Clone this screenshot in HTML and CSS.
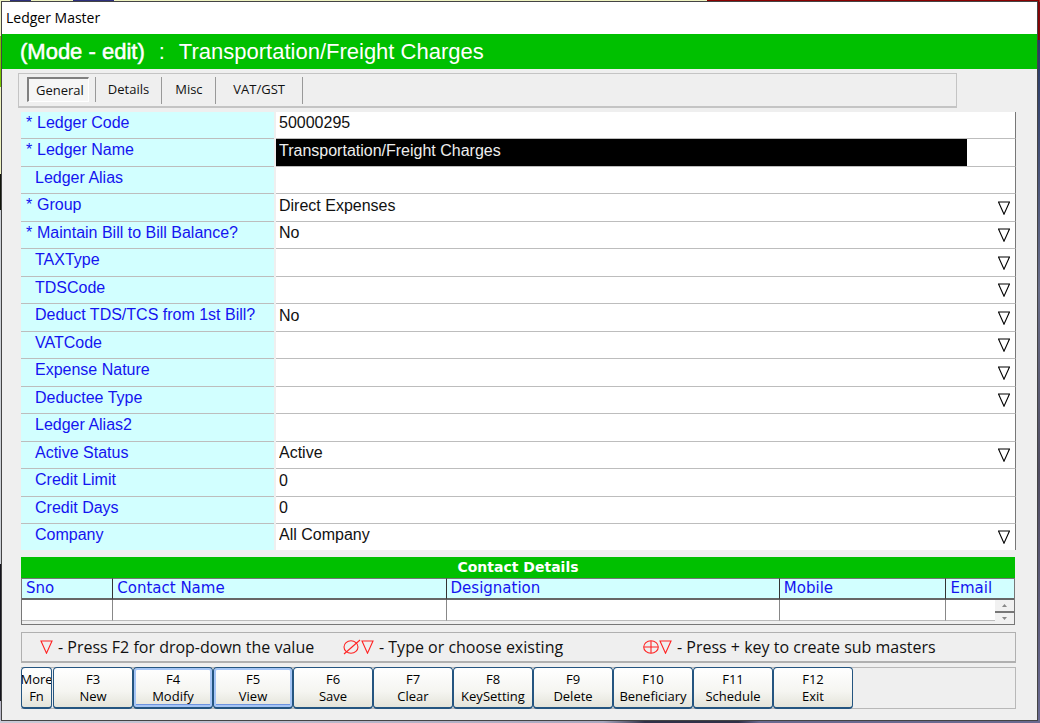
FILE: index.html
```html
<!DOCTYPE html>
<html lang="en">
<head>
<meta charset="utf-8">
<title>Ledger Master</title>
<link rel="stylesheet" href="styles.css">
</head>
<body>
<svg class="defs" aria-hidden="true">
  <symbol id="tri" viewBox="0 0 12 14"><path d="M.5 1H11.5L6 13.2Z" fill="none" stroke="currentColor" stroke-width="1.1"/></symbol>
  <symbol id="nil" viewBox="0 0 18 16"><ellipse cx="8" cy="8" rx="7" ry="6.2" fill="none" stroke="currentColor" stroke-width="1.1"/><path d="M1 15 17 1" stroke="currentColor" stroke-width="1.1"/></symbol>
  <symbol id="plus" viewBox="0 0 16 16"><ellipse cx="8" cy="8" rx="7.3" ry="6.3" fill="none" stroke="currentColor" stroke-width="1.1"/><path d="M1 8H15M8 2V14" stroke="currentColor" stroke-width="1.1"/></symbol>
</svg>
<main class="window">
  <header class="titlebar">Ledger Master</header>
  <h1 class="banner"><span class="mode">(Mode - edit)</span><span>:</span><span>Transportation/Freight Charges</span></h1>
  <nav class="tabs">
    <button class="tab active" type="button">General</button>
    <button class="tab" type="button">Details</button>
    <button class="tab" type="button">Misc</button>
    <button class="tab" type="button">VAT/GST</button>
  </nav>
  <form class="form">
    <div class="row"><label class="req" for="code">Ledger Code</label><div class="cell"><input id="code" type="text" value="50000295"></div></div>
    <div class="row"><label class="req" for="name">Ledger Name</label><div class="cell"><input id="name" class="selected" type="text" value="Transportation/Freight Charges"></div></div>
    <div class="row"><label for="alias">Ledger Alias</label><div class="cell"><input id="alias" type="text"></div></div>
    <div class="row"><label class="req" for="group">Group</label><div class="cell"><select id="group"><option>Direct Expenses</option></select><svg class="arrow"><use href="#tri"/></svg></div></div>
    <div class="row"><label class="req" for="bill">Maintain Bill to Bill Balance?</label><div class="cell"><select id="bill"><option>No</option></select><svg class="arrow"><use href="#tri"/></svg></div></div>
    <div class="row"><label for="tax">TAXType</label><div class="cell"><select id="tax"><option></option></select><svg class="arrow"><use href="#tri"/></svg></div></div>
    <div class="row"><label for="tds">TDSCode</label><div class="cell"><select id="tds"><option></option></select><svg class="arrow"><use href="#tri"/></svg></div></div>
    <div class="row"><label for="deduct">Deduct TDS/TCS from 1st Bill?</label><div class="cell"><select id="deduct"><option>No</option></select><svg class="arrow"><use href="#tri"/></svg></div></div>
    <div class="row"><label for="vat">VATCode</label><div class="cell"><select id="vat"><option></option></select><svg class="arrow"><use href="#tri"/></svg></div></div>
    <div class="row"><label for="nature">Expense Nature</label><div class="cell"><select id="nature"><option></option></select><svg class="arrow"><use href="#tri"/></svg></div></div>
    <div class="row"><label for="deductee">Deductee Type</label><div class="cell"><select id="deductee"><option></option></select><svg class="arrow"><use href="#tri"/></svg></div></div>
    <div class="row"><label for="alias2">Ledger Alias2</label><div class="cell"><input id="alias2" type="text"></div></div>
    <div class="row"><label for="status">Active Status</label><div class="cell"><select id="status"><option>Active</option></select><svg class="arrow"><use href="#tri"/></svg></div></div>
    <div class="row"><label for="limit">Credit Limit</label><div class="cell"><input id="limit" type="text" value="0"></div></div>
    <div class="row"><label for="days">Credit Days</label><div class="cell"><input id="days" type="text" value="0"></div></div>
    <div class="row"><label for="company">Company</label><div class="cell"><select id="company"><option>All Company</option></select><svg class="arrow"><use href="#tri"/></svg></div></div>
  </form>
  <section class="contacts">
    <table>
      <caption>Contact Details</caption>
      <thead><tr><th class="sno">Sno</th><th class="wide">Contact Name</th><th class="wide">Designation</th><th class="mobile">Mobile</th><th>Email</th></tr></thead>
      <tbody><tr><td></td><td></td><td></td><td></td><td></td></tr></tbody>
    </table>
    <div class="spinner">
      <button type="button" aria-label="Scroll up"><svg viewBox="0 0 5 3"><path d="M0 3H5L2.500 0Z"/></svg></button>
      <button type="button" aria-label="Scroll down"><svg viewBox="0 0 5 3"><path d="M0 0H5L2.500 3Z"/></svg></button>
    </div>
  </section>
  <section class="legend">
    <p><svg class="tri"><use href="#tri"/></svg><span>- Press F2 for drop-down the value</span></p>
    <p><svg class="nil"><use href="#nil"/></svg><svg class="tri"><use href="#tri"/></svg><span>- Type or choose existing</span></p>
    <p><svg class="plus"><use href="#plus"/></svg><svg class="tri"><use href="#tri"/></svg><span>- Press + key to create sub masters</span></p>
  </section>
  <footer class="toolbar">
    <button class="more" type="button"><span>More</span><span>Fn</span></button>
    <button type="button"><span>F3</span><span>New</span></button>
    <button class="hot" type="button"><span>F4</span><span>Modify</span></button>
    <button class="hot" type="button"><span>F5</span><span>View</span></button>
    <button type="button"><span>F6</span><span>Save</span></button>
    <button type="button"><span>F7</span><span>Clear</span></button>
    <button type="button"><span>F8</span><span>KeySetting</span></button>
    <button type="button"><span>F9</span><span>Delete</span></button>
    <button type="button"><span>F10</span><span>Beneficiary</span></button>
    <button type="button"><span>F11</span><span>Schedule</span></button>
    <button type="button"><span>F12</span><span>Exit</span></button>
  </footer>
</main>
</body>
</html>
```
FILE: styles.css
```css
* { box-sizing: border-box; }

body {
  margin: 0;
  padding: 1px 2px 2px 1px;
  min-height: 100vh;
  font: 16px/20px "Liberation Sans", Arial, sans-serif;
  color: #111;
  background:
    linear-gradient(90deg, #8b0000, #8b0000) right top / 32% 40px no-repeat,
    linear-gradient(90deg, #eef2c0 0 1%, #2d2f7c 1% 3%, #eef2c0 3% 7%, #2d2f7c 7% 11%, #eef2c0 11%) left top / 100% 2px no-repeat,
    linear-gradient(90deg, #c9cad6, #a9a8c0 58%, #303048 62% 71%, #696990 73%) left bottom / 100% 3px no-repeat,
    linear-gradient(#eef2c0 0 5%, #78c800 5% 12%, #eef2c0 12% 24%, #10140a 24% 29%, #ccd0d6 29% 78%, #14141c 78% 97%, #b8b8c8 97%) left top / 2px 100% no-repeat,
    linear-gradient(#1c2f60, #696d88 40%, #504c60 65%, #696990);
}

button, input, select { font: inherit; color: inherit; margin: 0; border: 0; border-radius: 0; }

.defs { position: absolute; width: 0; height: 0; }

.window {
  display: flex;
  flex-direction: column;
  border: 1px solid #444;
  background: #efefef;
  min-height: calc(100vh - 3px);
}

.titlebar {
  height: 32px;
  padding: 6px 4px;
  background: #fff;
  color: #000;
  font: 14px/20px "Open Sans", "Noto Sans", sans-serif;
}

.banner {
  display: flex;
  gap: 14px;
  margin: 0;
  padding: 6px 18px 5px;
  background: #00c000;
  color: #fff;
  font-size: 22px;
  line-height: 24px;
  font-weight: 400;
}
.mode { -webkit-text-stroke: 0.5px #fff; }

.tabs {
  display: flex;
  margin: 4px 80px 4px 16px;
  padding: 3px 8px 2px;
  border: 1px solid #c4c4c4;
  border-width: 1px 1px 2px 1px;
}
.tab {
  height: 27px;
  padding: 0 12px 4px 13px;
  border-right: 1px solid #999;
  background: none;
  font: 13px/22px "Open Sans", "Noto Sans", sans-serif;
}
.tab:last-child { min-width: 87px; }
.tab.active {
  margin-right: 6px;
  height: 25px;
  padding: 0 4px 0 7px;
  border: 1px solid #ccc;
  border-width: 2px 1px 1px 2px;
  border-color: #808080 #fff #fff #808080;
  background: #f6f6f6;
  box-shadow: 6px 0 #efefef, 7px 0 #999;
}

.form { margin: 0 21px 0 19px; }
.row {
  display: grid;
  grid-template-columns: 253px 1fr;
  column-gap: 2px;
  height: 27px;
}
.row:nth-child(even) { height: 28px; }
.row > * { border-bottom: 1px solid #bdbdbd; }
.row:last-child { height: 26px; }
.row:last-child > * { border-bottom: 0; }
.row label {
  padding: 1px 0 0 14px;
  background: #d2ffff;
  color: #1414f0;
}
.row .req { padding-left: 5px; }
.req::before { content: "*"; display: inline-block; width: 11px; }
.cell {
  display: flex;
  align-items: center;
  min-width: 0;
  background: #fff;
  border-right: 1px solid #777;
}
.cell input, .cell select {
  flex: 1;
  min-width: 0;
  height: 100%;
  padding: 0 3px 4px;
  background: none;
  appearance: none;
  outline: 0;
}
.cell .selected { flex: 0 0 auto; width: 93.5%; background: #000; color: #eee; }
.arrow { width: 12px; height: 14px; margin: 0 5px 0 0; color: #000; }

.contacts {
  position: relative;
  margin: 7px 22px 7px 19px;
  border: 1px solid #777;
  border-top: 0;
  padding-bottom: 3px;
  background: #efefef;
}
table { width: 100%; table-layout: fixed; border-collapse: separate; border-spacing: 0; }
caption {
  height: 21px;
  margin: 0 -1px;
  background: #00c000;
  color: #fff;
  font: bold 14px/20px "DejaVu Sans", Verdana, sans-serif;
}
th {
  height: 22px;
  padding: 0 4px;
  background: #d2ffff;
  border-top: 1px solid #777;
  border-bottom: 2px solid #666;
  border-right: 1px solid #333;
  color: #1414f0;
  text-align: left;
  font: 15px/19px "DejaVu Sans", Verdana, sans-serif;
}
td { height: 21px; padding: 0; background: #fff; border-right: 1px solid #888; border-bottom: 1px solid #bbb; }
th:last-child, td:last-child { border-right: 0; }
.sno { width: 9.2%; }
.wide { width: 33.6%; }
.mobile { width: 16.8%; }
.spinner {
  position: absolute;
  right: 0;
  bottom: 0;
  width: 19px;
  display: grid;
  gap: 2px;
  background: #777;
}
.spinner button { display: grid; place-items: center; height: 11px; padding: 0; background: #f1f1f1; }
.spinner svg { width: 5px; height: 3px; fill: #888; }

.legend {
  display: grid;
  grid-template-columns: 303px 300px 1fr;
  align-items: center;
  margin: 0 21px 4px 19px;
  padding: 0 0 0 18px;
  height: 31px;
  border: 1px solid #b0b0b0;
  border-bottom-width: 2px;
}
.legend p { display: flex; align-items: center; margin: 0; font: 16px/20px "Open Sans", "Noto Sans", sans-serif; white-space: nowrap; }
.legend svg { flex: none; color: #f22; }
.legend span { margin-left: 5px; }
.tri { width: 13px; height: 14px; }
.nil { width: 18px; height: 16px; }
.plus { width: 16px; height: 16px; }

.toolbar {
  display: flex;
  height: 42px;
  margin: 0 21px 10px 19px;
  border: 1px solid #b8b8b8;
  border-left: 0;
}
.toolbar button {
  display: flex;
  flex-direction: column;
  align-items: center;
  justify-content: center;
  width: 80px;
  margin: -1px 0;
  padding: 0;
  border: 1px solid #245580;
  border-bottom-width: 2px;
  border-radius: 4px;
  background: linear-gradient(#fff, #f5f5f1 60%, #e4e4da);
  font: 13px/17px "Open Sans", "Noto Sans", sans-serif;
  color: #000;
  overflow: hidden;
}
.toolbar .more { width: 31px; margin-right: 1px; }
.toolbar .hot { border-color: #245580; box-shadow: inset 0 0 0 2px #a5c5f5, inset 0 -3px #6d93e0; }
```
